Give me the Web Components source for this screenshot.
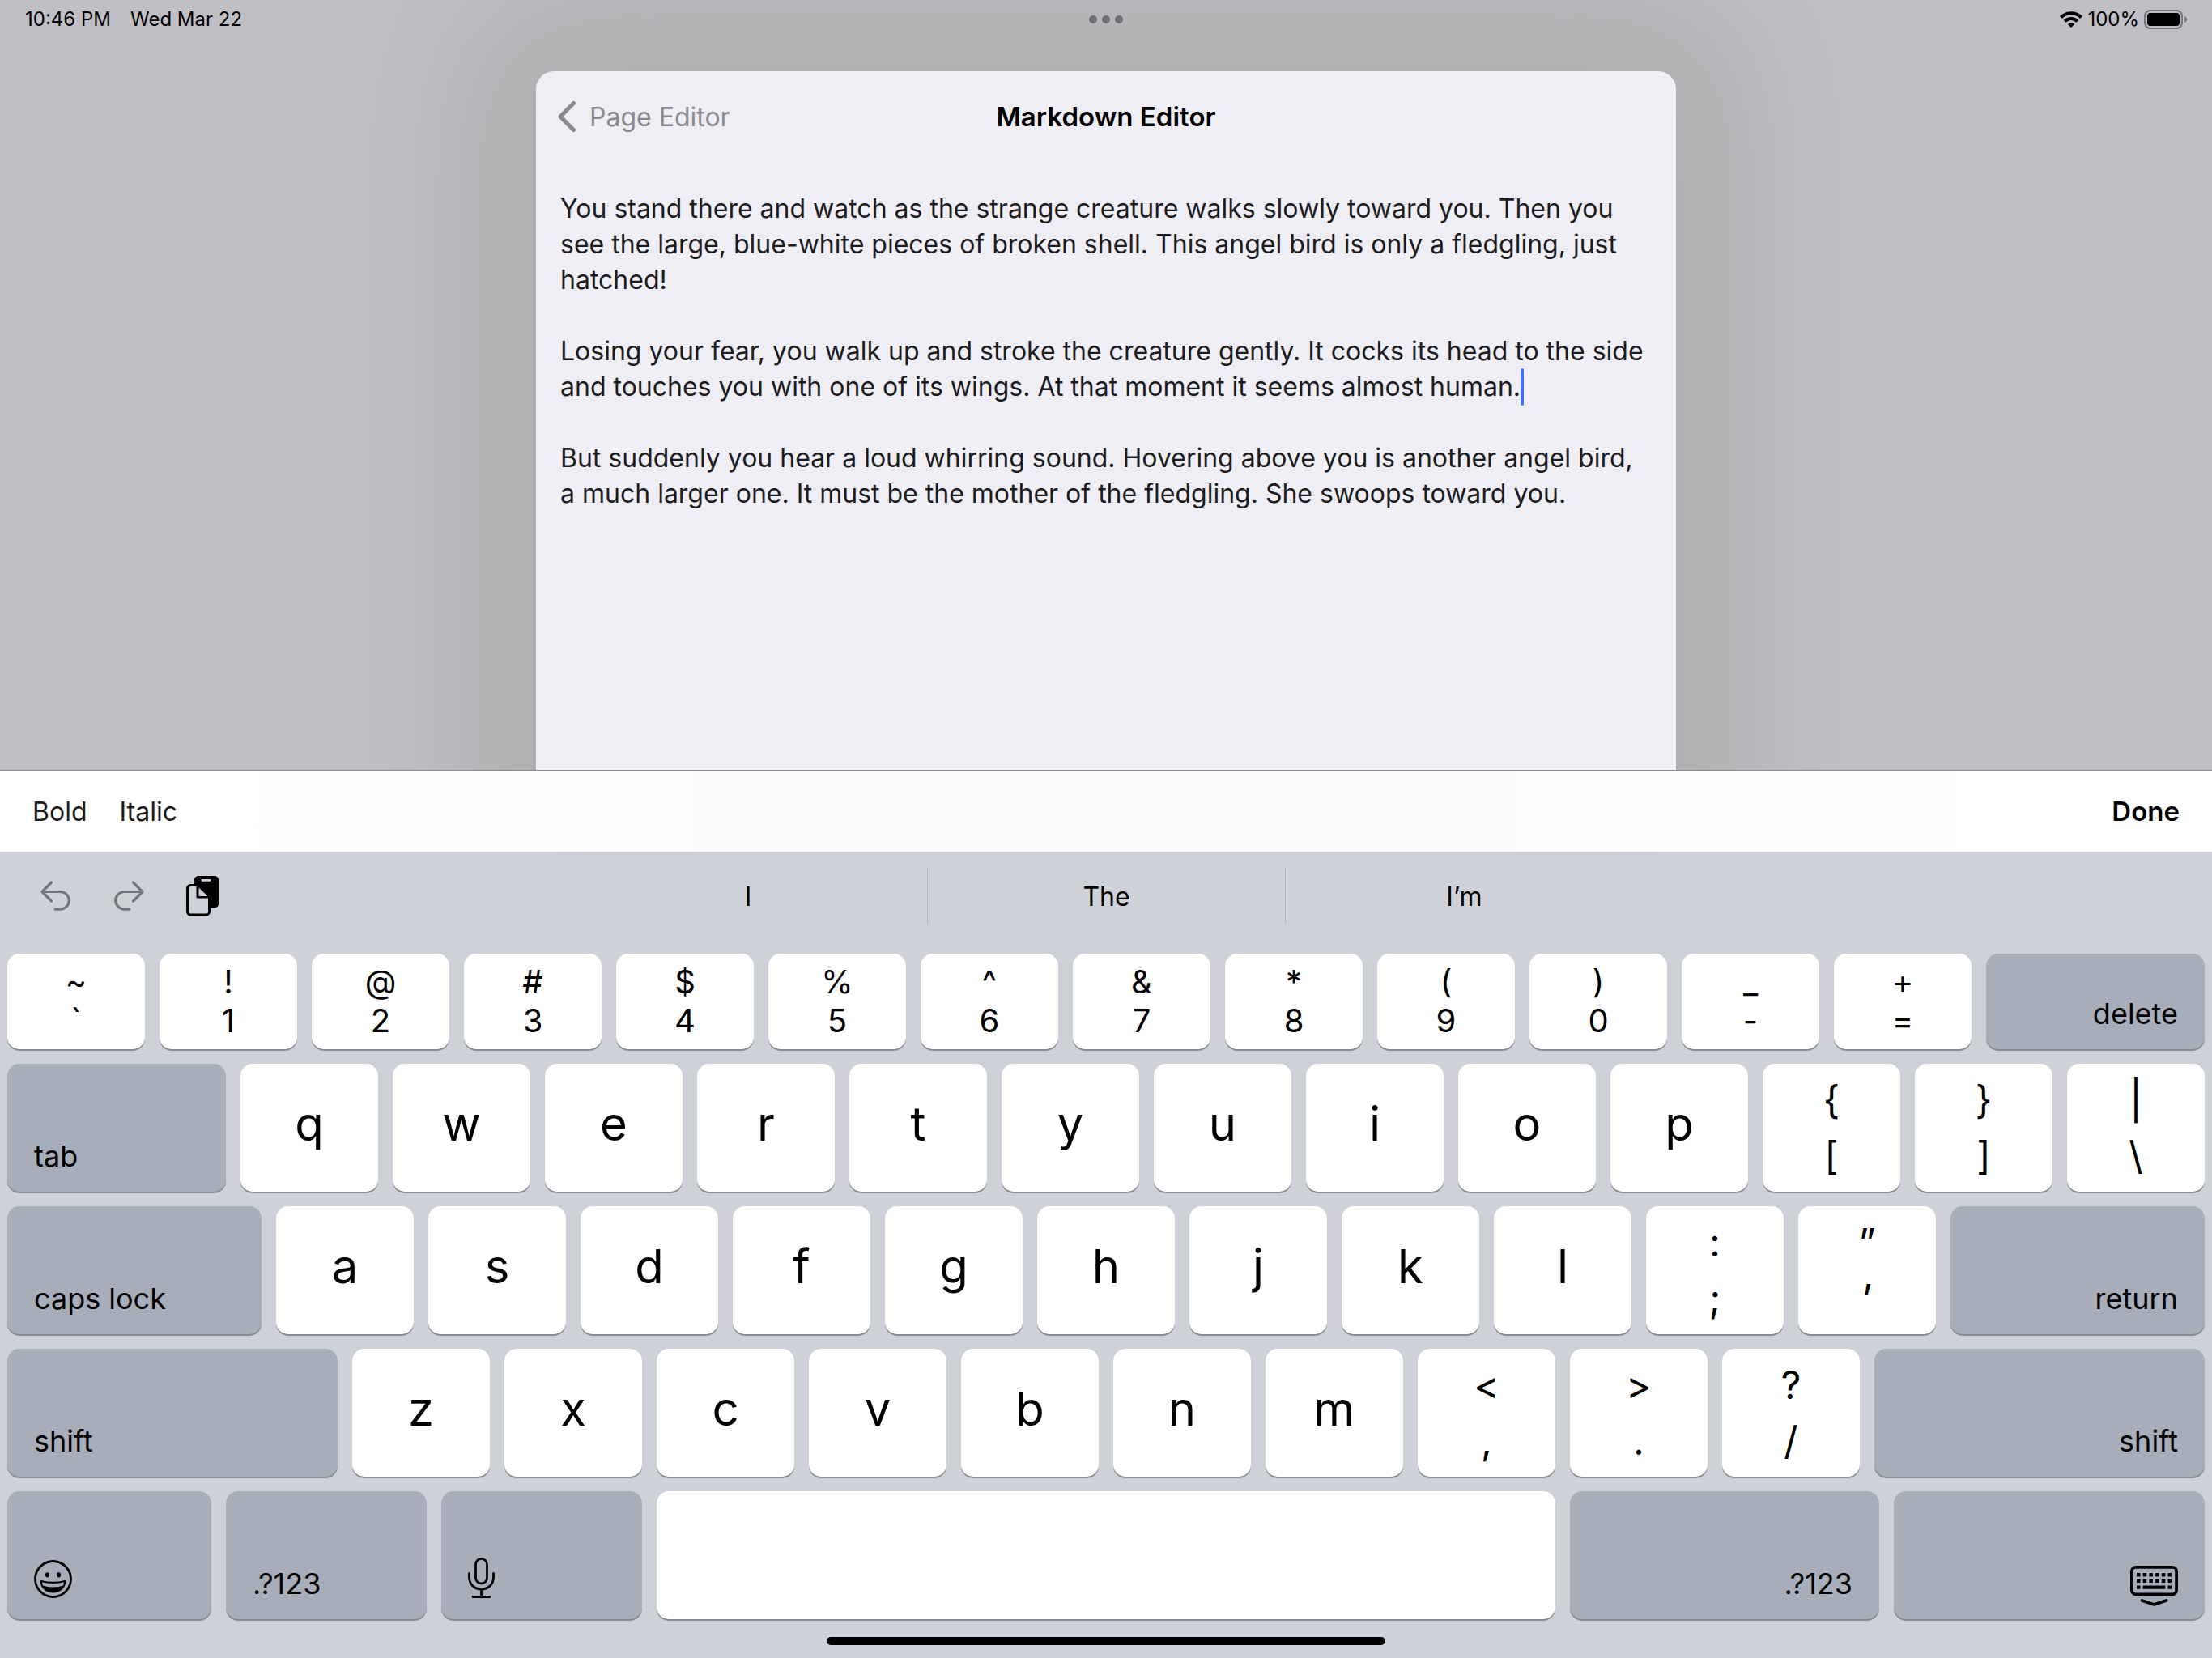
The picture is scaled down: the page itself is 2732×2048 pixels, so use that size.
<!DOCTYPE html>
<html lang="en">
<head>
<meta charset="utf-8">
<title>Markdown Editor</title>
<style>
  html, body { margin: 0; height: 100%; }
  body { font-family: Inter, "Liberation Sans", sans-serif; color: #000; }
</style>
</head>
<body>
<tablet-screen></tablet-screen>

<script>
const reset = `
  *, *::before, *::after { box-sizing: border-box; }
  button, a, textarea { font: inherit; color: inherit; background: none; border: 0; margin: 0; padding: 0; text-decoration: none; }
  svg { display: block; flex: none; }
`;

function define(name, html, setup) {
  const template = document.createElement('template');
  template.innerHTML = html;
  customElements.define(name, class extends HTMLElement {
    connectedCallback() {
      if (this.shadowRoot) return;
      this.attachShadow({ mode: 'open' }).append(template.content.cloneNode(true));
      if (setup) setup(this, this.shadowRoot);
    }
  });
}

define('status-bar', `
<style>${reset}
  :host { display: grid; grid-template-columns: 1fr auto 1fr; align-items: center; height: 48px; padding: 0 31px; font-size: 24px; line-height: 30px; position: relative; z-index: 1; }
  .left { display: flex; gap: 24px; }
  .dots { display: flex; gap: 6px; border-radius: 6px; }
  .dots i { width: 10px; height: 10px; border-radius: 50%; background: #6f7074; }
  .right { display: flex; justify-content: flex-end; align-items: center; gap: 6px; }
</style>
<div class="left"><span>10:46 PM</span><span>Wed Mar 22</span></div>
<button class="dots" aria-label="Multitasking"><i></i><i></i><i></i></button>
<div class="right">
  <svg width="28" height="20" viewBox="0 0 28 20" aria-hidden="true">
    <path d="M1.500 7.400a17.800 17.800 0 0 1 25 0" fill="none" stroke="#000" stroke-width="4.200"/>
    <path d="M6.200 12.300a11 11 0 0 1 15.600 0" fill="none" stroke="#000" stroke-width="4"/>
    <path d="M9.800 16a6 6 0 0 1 8.400 0L14 20z"/>
  </svg>
  <span>100%</span>
  <svg width="53" height="24" viewBox="0 0 53 24" aria-hidden="true">
    <rect x="1" y="1" width="46" height="22" rx="7" fill="none" stroke="#77777b" stroke-width="2"/>
    <rect x="4" y="4" width="40" height="16" rx="4"/>
    <path d="M50 8c4 1.500 4 6.500 0 8z" fill="#77777b"/>
  </svg>
</div>`);

define('editor-sheet', `
<style>${reset}
  :host { display: flex; flex-direction: column; width: 100%; max-width: 1408px; background: #efeef5; border-radius: 22px 22px 0 0; box-shadow: 0 0 170px 74px #abadad; }
  header { display: grid; grid-template-columns: 1fr auto 1fr; align-items: center; height: 112px; padding: 0 27px; font-size: 32px; }
  .back { justify-self: start; display: flex; align-items: center; gap: 17px; color: #8a8a8e; }
  h1 { margin: 0; font-size: 33px; font-weight: 600; }
  .field { position: relative; flex: 1; display: flex; }
  textarea, .mirror { font-size: 32px; line-height: 44px; padding: 36px 30px; width: 100%; color: #1c1c1e; white-space: pre-wrap; overflow-wrap: break-word; }
  textarea { resize: none; outline: 0; overflow: hidden; }
  .mirror { position: absolute; inset: 0; visibility: hidden; }
  .caret { position: absolute; width: 4px; height: 46px; border-radius: 2px; background: #466ff0; }
</style>
<header>
  <a class="back" href="#page-editor">
    <svg width="22" height="38" viewBox="0 0 22 38" fill="none" stroke="currentColor" stroke-width="5" stroke-linecap="round" stroke-linejoin="round" aria-hidden="true"><path d="M19.500 2.500 3 19l16.500 16.500"/></svg>
    <span>Page Editor</span>
  </a>
  <h1>Markdown Editor</h1>
</header>
<div class="field">
  <textarea aria-label="Markdown" spellcheck="false"></textarea>
  <div class="caret"></div>
</div>`, (host, root) => {
  const area = root.querySelector('textarea');
  const caret = root.querySelector('.caret');
  const paragraphs = [
    'You stand there and watch as the strange creature walks slowly toward you. Then you see the large, blue-white pieces of broken shell. This angel bird is only a fledgling, just hatched!',
    'Losing your fear, you walk up and stroke the creature gently. It cocks its head to the side and touches you with one of its wings. At that moment it seems almost human.',
    'But suddenly you hear a loud whirring sound. Hovering above you is another angel bird, a much larger one. It must be the mother of the fledgling. She swoops toward you.'
  ];
  area.value = paragraphs.join('\n\n');
  const at = area.value.indexOf('human.') + 6;

  // Lay the same text out in a throwaway block to find where the insertion point falls.
  const placeCaret = () => {
    const mirror = document.createElement('div');
    mirror.className = 'mirror';
    const mark = document.createElement('span');
    mirror.append(area.value.slice(0, at), mark);
    area.parentNode.append(mirror);
    const box = mirror.getBoundingClientRect(), m = mark.getBoundingClientRect();
    caret.style.left = Math.round(m.left - box.left) + 'px';
    caret.style.top = Math.round((m.top + m.bottom) / 2 - box.top - 23) + 'px';
    mirror.remove();
  };
  placeCaret();
  document.fonts.ready.then(placeCaret);
  addEventListener('resize', placeCaret);
});

define('format-bar', `
<style>${reset}
  :host { display: flex; align-items: center; gap: 40px; height: 101px; padding: 0 40px; border-top: 1px solid #8b8b90; background: linear-gradient(90deg, #fff 10%, #fcfcff 35%, #fcfcff 65%, #fff 90%); font-size: 32px; color: #1c1c1e; position: relative; z-index: 1; }
  .done { margin-left: auto; font-size: 33px; font-weight: 600; color: #000; }
</style>
<button>Bold</button><button>Italic</button><button class="done">Done</button>`);

define('suggestion-bar', `
<style>${reset}
  :host { display: grid; grid-template-columns: 1fr minmax(0, 1326px) 1fr; align-items: center; height: 126px; padding-bottom: 16px; font-size: 32px; }
  .tools { display: flex; align-items: center; gap: 52px; padding-left: 50px; color: #75767a; }
  .tools button:last-child { color: #000; }
  .words { display: grid; grid-template-columns: repeat(3, 1fr); }
  .words button { height: 70px; }
  .words button + button { border-left: 1px solid #b4b6be; }
</style>
<div class="tools">
  <button aria-label="Undo"><svg width="38" height="38" viewBox="0 0 38 38" fill="none" stroke="currentColor" stroke-width="3.200" stroke-linecap="round" stroke-linejoin="round"><path d="M13.500 2 2 13.500 13.500 25M2 13.500h22.500a10.800 10.800 0 0 1 0 21.600H18"/></svg></button>
  <button aria-label="Redo"><svg width="38" height="38" viewBox="0 0 38 38" fill="none" stroke="currentColor" stroke-width="3.200" stroke-linecap="round" stroke-linejoin="round"><path d="M24.500 2 36 13.500 24.500 25M36 13.500H13.500a10.800 10.800 0 0 0 0 21.600H20"/></svg></button>
  <button aria-label="Paste"><svg width="40" height="50" viewBox="0 0 40 50">
    <rect x="10" y="0" width="30" height="39.500" rx="5"/>
    <rect x="18.500" y="4" width="12" height="2.800" rx="1.400" fill="#cfd1d9"/>
    <path d="M5.500 11.500H14V26h14.500v18a4 4 0 0 1-4 4h-19a4 4 0 0 1-4-4V15.500a4 4 0 0 1 4-4z" fill="#cfd1d9" stroke="#000" stroke-width="3" stroke-linejoin="round"/>
    <path d="M15.500 14.500V25H26.500z" fill="#cfd1d9"/>
  </svg></button>
</div>
<div class="words"><button>I</button><button>The</button><button>I’m</button></div>`);

define('key-cap', `
<style>${reset}
  :host { display: flex; min-width: 0; }
  button { flex: 1; min-width: 0; display: flex; flex-direction: column; align-items: center; justify-content: center; border-radius: 15px; background: #fff; box-shadow: 0 2px 0 #88898d; font-size: 58px; line-height: 70px; padding-bottom: 10px; color: #000; }
  :host([kind="number"]) button { font-size: 40px; line-height: 48px; padding: 0; }
  :host([kind="pair"]) button { font-size: 48px; line-height: 69px; padding: 0; }
  :host([kind="left"]) button, :host([kind="right"]) button { background: #a7adb9; font-size: 36px; line-height: 44px; justify-content: flex-end; padding: 0 33px 22px; }
  :host([kind="left"]) button { align-items: flex-start; }
  :host([kind="right"]) button { align-items: flex-end; }
  ::slotted(span) { display: block; white-space: nowrap; }
  ::slotted(svg) { display: block; margin-bottom: 4px; }
  :host([kind="right"]) ::slotted(svg) { margin-bottom: -6px; }
</style>
<button><slot></slot></button>`, (host, root) => {
  if (host.title) root.querySelector('button').setAttribute('aria-label', host.title);
});

const faceIcon = `<svg width="47" height="47" viewBox="0 0 47 47" fill="none" stroke="#000">
  <circle cx="23.500" cy="23.500" r="22" stroke-width="2.800"/>
  <ellipse cx="16.500" cy="18.300" rx="2.600" ry="3.100" fill="#000" stroke="none"/>
  <ellipse cx="30.500" cy="18.300" rx="2.600" ry="3.100" fill="#000" stroke="none"/>
  <path d="M8.800 26c9 2.400 20.400 2.400 29.400 0 0 7.800-6.500 13.300-14.700 13.300S8.800 33.800 8.800 26z" stroke-width="2.200" stroke-linejoin="round"/>
  <path d="M10.500 31.500c8 2.600 18 2.600 26 0-2 5-7 8-13 8s-11-3-13-8z" fill="#000" stroke="none"/>
</svg>`;
const micIcon = `<svg width="33" height="50" viewBox="0 0 33 50" fill="none" stroke="#000" stroke-width="2.800" stroke-linecap="round">
  <rect x="9.500" y="1.400" width="14" height="30.600" rx="7"/>
  <path d="M1.500 19.500V24c0 9 6.500 15 15 15s15-6 15-15v-4.500M16.500 39v9.500M6 48.500h21"/>
</svg>`;
const hideIcon = `<svg width="59" height="50" viewBox="0 0 59 50">
  <rect x="1.900" y="1.900" width="55.200" height="33.400" rx="5" fill="none" stroke="#000" stroke-width="3.800"/>
  <path d="M8 9h4.500v4.400H8zM15.700 9h4.500v4.400h-4.500zM23.400 9h4.500v4.400h-4.500zM31.100 9h4.500v4.400h-4.500zM38.800 9h4.500v4.400h-4.500zM46.500 9h4.500v4.400h-4.500zM8 16.700h4.500v4.400H8zM15.700 16.700h4.500v4.400h-4.500zM23.400 16.700h4.500v4.400h-4.500zM31.100 16.700h4.500v4.400h-4.500zM38.800 16.700h4.500v4.400h-4.500zM46.500 16.700h4.500v4.400h-4.500zM8 24.400h4.500v4.400H8zM15.700 24.400h27.600v4.400H15.700zM46.500 24.400h4.500v4.400h-4.500z"/>
  <path d="M14.500 43l15 5 15-5" fill="none" stroke="#000" stroke-width="3.800" stroke-linecap="round" stroke-linejoin="round"/>
</svg>`;

define('key-board', `
<style>${reset}
  :host { display: flex; flex-direction: column; gap: 18px; padding: 0 9px 16px; }
  .row { display: flex; gap: 18px; height: 158px; }
  .row.short { height: 118px; }
  .home { align-self: center; width: 690px; height: 10px; border-radius: 5px; background: #000; margin-top: 4px; }
</style>
<div class="home"></div>`, (host, root) => {
  const home = root.querySelector('.home');
  const letters = text => [...text].map(c => ({ w: 170, text: [c] }));
  const pairs = (text, kind) => text.split(' ').map(p => ({ w: 170, kind, text: [...p] }));
  const rows = [
    [...pairs('~\` !1 @2 #3 $4 %5 ^6 &7 *8 (9 )0 _- +=', 'number'), { w: 270, kind: 'right', text: ['delete'] }],
    [{ w: 270, kind: 'left', text: ['tab'] }, ...letters('qwertyuiop'), ...pairs('{[ }] |\\', 'pair')],
    [{ w: 314, kind: 'left', text: ['caps lock'] }, ...letters('asdfghjkl'), ...pairs(':; ”’', 'pair'), { w: 314, kind: 'right', text: ['return'] }],
    [{ w: 408, kind: 'left', text: ['shift'] }, ...letters('zxcvbnm'), ...pairs('<, >. ?/', 'pair'), { w: 408, kind: 'right', text: ['shift'] }],
    [{ w: 252, kind: 'left', label: 'Emoji', icon: faceIcon }, { w: 248, kind: 'left', text: ['.?123'] },
     { w: 248, kind: 'left', label: 'Dictate', icon: micIcon }, { w: 1110, label: 'Space' },
     { w: 382, kind: 'right', text: ['.?123'] }, { w: 384, kind: 'right', label: 'Hide keyboard', icon: hideIcon }]
  ];
  rows.forEach((keys, index) => {
    const row = document.createElement('div');
    row.className = index ? 'row' : 'row short';
    for (const key of keys) {
      const cap = document.createElement('key-cap');
      cap.style.flex = key.w + ' 1 0';
      if (key.kind) cap.setAttribute('kind', key.kind);
      if (key.label) cap.title = key.label;
      if (key.icon) cap.innerHTML = key.icon;
      for (const line of key.text || []) {
        const span = document.createElement('span');
        span.textContent = line;
        cap.append(span);
      }
      row.append(cap);
    }
    home.before(row);
  });
});

define('tablet-screen', `
<style>${reset}
  :host { display: flex; flex-direction: column; min-height: 100vh; background: #cfd1d9; }
  main { flex: 1; display: flex; flex-direction: column; overflow: hidden; background: #c0bfc5; }
  editor-sheet { flex: 1; align-self: center; margin-top: 40px; margin-bottom: -400px; }
</style>
<main><status-bar></status-bar><editor-sheet></editor-sheet></main>
<format-bar></format-bar>
<suggestion-bar></suggestion-bar>
<key-board></key-board>`);
</script>
</body>
</html>
